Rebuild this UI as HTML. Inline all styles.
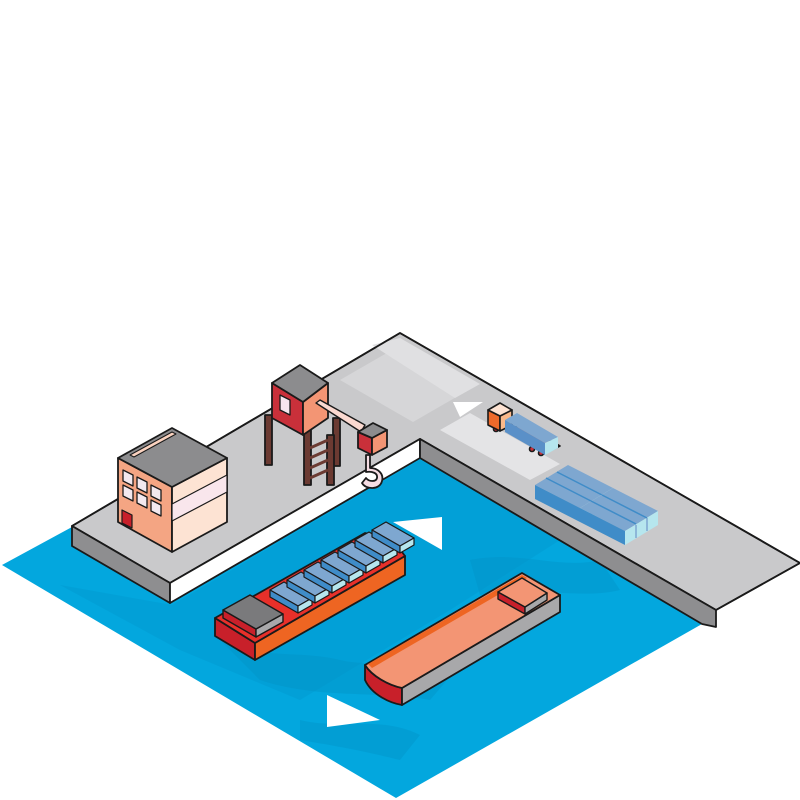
<!DOCTYPE html>
<html><head><meta charset="utf-8"><style>html,body{margin:0;padding:0;background:#fff;}svg{display:block}</style></head>
<body>
<svg width="800" height="800" viewBox="0 0 800 800" xmlns="http://www.w3.org/2000/svg" stroke-linejoin="round">
<!-- water -->
<polygon points="2,565 72,527 420,440 702,624 396,798" fill="#03a7de"/>
<polygon points="60,585 172,605 420,460 560,540 450,610 300,700 180,650" fill="#0299cf" opacity="0.45"/>
<path d="M220,640 C260,660 300,650 340,660 C380,670 420,650 460,665 L430,700 C380,690 320,700 260,680Z" fill="#0290c4" opacity="0.4"/>
<path d="M300,720 C340,730 380,715 420,735 L400,760 C360,750 330,745 300,740Z" fill="#0290c4" opacity="0.35"/>
<path d="M470,560 C520,550 560,570 600,560 L620,590 C580,600 530,585 480,595Z" fill="#0290c4" opacity="0.35"/>
<!-- pier -->
<polygon points="72,526 400,333 800,563 716,610 420,439 170,583" fill="#c9c9cb" stroke="#1a1a1a" stroke-width="1.8"/>
<polygon points="340,380 392,350 465,392 413,422" fill="#d6d6d8"/>
<polygon points="372,345 400,338 480,384 455,398" fill="#e0e0e2"/>
<polygon points="440,430 470,413 560,464 530,480" fill="#e4e4e6"/>
<polygon points="72,526 400,333 800,563 716,610 420,439 170,583" fill="none" stroke="#1a1a1a" stroke-width="1.8"/>
<polygon points="72,526 170,583 170,603 72,546" fill="#8e8e90" stroke="#1a1a1a" stroke-width="1.8"/>
<polygon points="170,583 420,439 420,458 170,603" fill="#ffffff" stroke="#1a1a1a" stroke-width="1.8"/>
<polygon points="420,439 716,610 716,627 702,624 420,458" fill="#8e8e90" stroke="#1a1a1a" stroke-width="1.8"/>
<!-- arrows -->
<polygon points="453,402 483,402 460,417" fill="#fff"/>
<polygon points="393,522 442,517 442,550" fill="#fff"/>
<polygon points="327,695 327,727 380,720" fill="#fff"/>
<!-- building -->
<g stroke="#1a1a1a" stroke-width="1.8">
<polygon points="118,458 118,522 172,552 172,487" fill="#f4a583"/>
<polygon points="172,487 227,458 227,522 172,552" fill="#fde3d3"/>
<polygon points="172,504 227,475 227,492 172,521" fill="#f9e6ec" stroke-width="1.2"/>
<polygon points="118,458 172,428 227,458 172,487" fill="#8c8c8e"/>
<polygon points="130,455 172,432 176,434 134,457" fill="#fbd3c0" stroke-width="1"/>
<g fill="#f2e8ee" stroke-width="1.3">
<polygon points="123,470 133,475 133,486 123,481"/><polygon points="137,477 147,482 147,493 137,488"/><polygon points="151,485 161,490 161,501 151,496"/>
<polygon points="123,485 133,490 133,501 123,496"/><polygon points="137,492 147,497 147,508 137,503"/><polygon points="151,500 161,505 161,516 151,511"/>
</g>
<polygon points="122,510 132,515 132,528 122,523" fill="#c8202a" stroke-width="1.2"/>
</g>
<!-- crane -->
<g stroke="#1a1a1a" stroke-width="1.8">
<rect x="265" y="415" width="7" height="50" fill="#6b3a32"/>
<rect x="333" y="418" width="7" height="48" fill="#6b3a32"/>
<rect x="304" y="430" width="7" height="55" fill="#6b3a32"/>
<rect x="327" y="435" width="7" height="50" fill="#6b3a32"/>
<g stroke="#6b3a32" stroke-width="3"><line x1="310" y1="448" x2="328" y2="440"/><line x1="310" y1="458" x2="328" y2="450"/><line x1="310" y1="468" x2="328" y2="460"/><line x1="310" y1="478" x2="328" y2="470"/></g>
<polygon points="272,383 272,418 303,435 303,402" fill="#c9303a"/>
<polygon points="303,402 328,383 328,418 303,435" fill="#f39574"/>
<polygon points="272,383 300,365 328,383 303,402" fill="#8c8c8e"/>
<polygon points="280,395 290,400 290,415 280,410" fill="#f6e5ee" stroke-width="1.3"/>
<polygon points="316,403 320,400 365,425 361,432" fill="#fbd9d0" stroke-width="1.4"/>
<polygon points="358,432 358,448 372,455 372,438" fill="#c9303a"/>
<polygon points="372,438 387,430 387,447 372,455" fill="#f39574"/>
<polygon points="358,432 373,423 387,430 372,438" fill="#8c8c8e"/>
<path d="M370,455 L370,468 C378,468 384,474 382,481 C380,490 366,490 362,483 L366,478 C369,482 376,482 377,478 C378,473 372,471 366,472 L366,455Z" fill="#f6dde4"/>
</g>
<!-- truck -->
<g stroke="#1a1a1a" stroke-width="1.6">
<circle cx="496" cy="429" r="2.5" fill="#c9303a"/><circle cx="532" cy="449" r="2.5" fill="#c9303a"/><circle cx="541" cy="453" r="2.5" fill="#c9303a"/>
<polygon points="510,430 548,452 560,446 522,424" fill="#f39574"/>
<polygon points="488,410 488,425 500,431 500,416" fill="#ee6a2b"/>
<polygon points="500,416 512,410 512,425 500,431" fill="#fbb98a"/>
<polygon points="488,410 500,403 512,410 500,416" fill="#fde3d3"/>
</g>
<polygon points="505,420 517,413 558,437 545,443" fill="#7ea7d0"/>
<polygon points="505,420 545,443 545,455 505,432" fill="#5a90c8"/>
<polygon points="545,443 558,437 558,448 545,455" fill="#b6e6ee"/>
<!-- containers -->
<g id="grp">
<polygon points="535,485 568,465 613,488 580,508" fill="#7ea7d0"/>
<polygon points="535,485 580,508 580,522 535,499" fill="#3f8cc8"/>
<polygon points="580,508 613,488 613,502 580,522" fill="#b6e6ee"/>
<line x1="546" y1="478" x2="591" y2="501" stroke="#3f8cc8" stroke-width="1.5"/>
<line x1="557" y1="472" x2="602" y2="495" stroke="#3f8cc8" stroke-width="1.5"/>
<line x1="591" y1="502" x2="591" y2="515" stroke="#7ea7d0" stroke-width="1.5"/>
<line x1="602" y1="495" x2="602" y2="508" stroke="#7ea7d0" stroke-width="1.5"/>
</g>
<use href="#grp" transform="translate(45,23)"/>
<!-- container ship -->
<g stroke="#1a1a1a" stroke-width="1.8">
<polygon points="215,618 255,643 255,660 215,636" fill="#c8202a"/>
<polygon points="255,643 405,556 405,575 255,660" fill="#ee6522"/>
<polygon points="215,618 365,533 393,540 405,556 255,643" fill="#e8302a"/>
</g>
<g stroke="#1a1a1a" stroke-width="1.4">
<polygon points="223,610 223,618 256,637 256,629" fill="#c8202a"/>
<polygon points="256,629 283,614 283,622 256,637" fill="#a8a8aa"/>
<polygon points="223,610 250,595 283,614 256,629" fill="#7a7a7c"/>
</g>
<g stroke="#1a1a1a" stroke-width="1.2">
<g id="c"><polygon points="270,590 284,582 312,598 298,606" fill="#7ea7d0"/><polygon points="270,590 298,606 298,613 270,597" fill="#3f8cc8"/><polygon points="298,606 312,598 312,605 298,613" fill="#b6e6ee"/></g>
<use href="#c" transform="translate(17,-10)"/><use href="#c" transform="translate(34,-20)"/><use href="#c" transform="translate(51,-30)"/><use href="#c" transform="translate(68,-40)"/><use href="#c" transform="translate(85,-50)"/><use href="#c" transform="translate(102,-60)"/>
</g>
<!-- barge -->
<g stroke="#1a1a1a" stroke-width="1.8">
<path d="M365,665 L365,680 C372,695 390,703 402,705 L402,688 C388,685 372,676 365,665Z" fill="#c8202a"/>
<polygon points="402,688 560,595 560,612 402,705" fill="#a8a8aa"/>
<path d="M365,665 L522,573 L560,595 L402,688 C388,685 372,676 365,665Z" fill="#f39574"/>
<path d="M368,664 L522,575 L527,578 L372,668Z" fill="#ee6522" stroke="none"/>
</g>
<g stroke="#1a1a1a" stroke-width="1.4">
<polygon points="498,592 498,599 525,614 525,607" fill="#c8202a"/>
<polygon points="525,607 547,593 547,600 525,614" fill="#a8a8aa"/>
<polygon points="498,592 522,578 547,593 525,607" fill="#f39574"/>
</g>
</svg>
</body></html>
